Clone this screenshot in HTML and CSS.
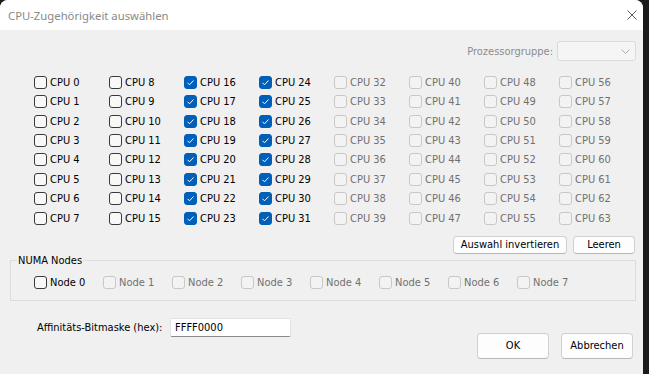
FILE: index.html
```html
<!DOCTYPE html>
<html lang="de">
<head>
  <meta charset="UTF-8">
  <meta name="viewport" content="width=device-width, initial-scale=1.0">
  <title>CPU-Zugehörigkeit auswählen</title>
  <link rel="stylesheet" href="styles.css">
</head>
<body>
  <div class="dialog">
    <div class="titlebar">
      <span class="title">CPU-Zugehörigkeit auswählen</span>
      <span class="close">
        <svg width="10" height="10" viewBox="0 0 10 10"><path d="M0.5 0.5 L9.5 9.5 M9.5 0.5 L0.5 9.5" stroke="#5c5c5c" stroke-width="1" fill="none"/></svg>
      </span>
    </div>

    <div class="content">
      <div class="group-row">
        <span class="group-label">Prozessorgruppe:</span>
        <div class="combo">
          <svg width="9" height="5" viewBox="0 0 9 5"><path d="M0.5 0.5 L4.5 4.5 L8.5 0.5" stroke="#b0b0b0" stroke-width="1" fill="none"/></svg>
        </div>
      </div>

      <div class="cpu-grid">
        <label class="cb"><span class="box"></span>CPU 0</label>
        <label class="cb"><span class="box"></span>CPU 1</label>
        <label class="cb"><span class="box"></span>CPU 2</label>
        <label class="cb"><span class="box"></span>CPU 3</label>
        <label class="cb"><span class="box"></span>CPU 4</label>
        <label class="cb"><span class="box"></span>CPU 5</label>
        <label class="cb"><span class="box"></span>CPU 6</label>
        <label class="cb"><span class="box"></span>CPU 7</label>

        <label class="cb"><span class="box"></span>CPU 8</label>
        <label class="cb"><span class="box"></span>CPU 9</label>
        <label class="cb"><span class="box"></span>CPU 10</label>
        <label class="cb"><span class="box"></span>CPU 11</label>
        <label class="cb"><span class="box"></span>CPU 12</label>
        <label class="cb"><span class="box"></span>CPU 13</label>
        <label class="cb"><span class="box"></span>CPU 14</label>
        <label class="cb"><span class="box"></span>CPU 15</label>

        <label class="cb on"><span class="box"><svg viewBox="0 0 11 11"><path d="M2.5 5.8 L4.5 7.8 L8.5 3.5"/></svg></span>CPU 16</label>
        <label class="cb on"><span class="box"><svg viewBox="0 0 11 11"><path d="M2.5 5.8 L4.5 7.8 L8.5 3.5"/></svg></span>CPU 17</label>
        <label class="cb on"><span class="box"><svg viewBox="0 0 11 11"><path d="M2.5 5.8 L4.5 7.8 L8.5 3.5"/></svg></span>CPU 18</label>
        <label class="cb on"><span class="box"><svg viewBox="0 0 11 11"><path d="M2.5 5.8 L4.5 7.8 L8.5 3.5"/></svg></span>CPU 19</label>
        <label class="cb on"><span class="box"><svg viewBox="0 0 11 11"><path d="M2.5 5.8 L4.5 7.8 L8.5 3.5"/></svg></span>CPU 20</label>
        <label class="cb on"><span class="box"><svg viewBox="0 0 11 11"><path d="M2.5 5.8 L4.5 7.8 L8.5 3.5"/></svg></span>CPU 21</label>
        <label class="cb on"><span class="box"><svg viewBox="0 0 11 11"><path d="M2.5 5.8 L4.5 7.8 L8.5 3.5"/></svg></span>CPU 22</label>
        <label class="cb on"><span class="box"><svg viewBox="0 0 11 11"><path d="M2.5 5.8 L4.5 7.8 L8.5 3.5"/></svg></span>CPU 23</label>

        <label class="cb on"><span class="box"><svg viewBox="0 0 11 11"><path d="M2.5 5.8 L4.5 7.8 L8.5 3.5"/></svg></span>CPU 24</label>
        <label class="cb on"><span class="box"><svg viewBox="0 0 11 11"><path d="M2.5 5.8 L4.5 7.8 L8.5 3.5"/></svg></span>CPU 25</label>
        <label class="cb on"><span class="box"><svg viewBox="0 0 11 11"><path d="M2.5 5.8 L4.5 7.8 L8.5 3.5"/></svg></span>CPU 26</label>
        <label class="cb on"><span class="box"><svg viewBox="0 0 11 11"><path d="M2.5 5.8 L4.5 7.8 L8.5 3.5"/></svg></span>CPU 27</label>
        <label class="cb on"><span class="box"><svg viewBox="0 0 11 11"><path d="M2.5 5.8 L4.5 7.8 L8.5 3.5"/></svg></span>CPU 28</label>
        <label class="cb on"><span class="box"><svg viewBox="0 0 11 11"><path d="M2.5 5.8 L4.5 7.8 L8.5 3.5"/></svg></span>CPU 29</label>
        <label class="cb on"><span class="box"><svg viewBox="0 0 11 11"><path d="M2.5 5.8 L4.5 7.8 L8.5 3.5"/></svg></span>CPU 30</label>
        <label class="cb on"><span class="box"><svg viewBox="0 0 11 11"><path d="M2.5 5.8 L4.5 7.8 L8.5 3.5"/></svg></span>CPU 31</label>

        <label class="cb off"><span class="box"></span>CPU 32</label>
        <label class="cb off"><span class="box"></span>CPU 33</label>
        <label class="cb off"><span class="box"></span>CPU 34</label>
        <label class="cb off"><span class="box"></span>CPU 35</label>
        <label class="cb off"><span class="box"></span>CPU 36</label>
        <label class="cb off"><span class="box"></span>CPU 37</label>
        <label class="cb off"><span class="box"></span>CPU 38</label>
        <label class="cb off"><span class="box"></span>CPU 39</label>

        <label class="cb off"><span class="box"></span>CPU 40</label>
        <label class="cb off"><span class="box"></span>CPU 41</label>
        <label class="cb off"><span class="box"></span>CPU 42</label>
        <label class="cb off"><span class="box"></span>CPU 43</label>
        <label class="cb off"><span class="box"></span>CPU 44</label>
        <label class="cb off"><span class="box"></span>CPU 45</label>
        <label class="cb off"><span class="box"></span>CPU 46</label>
        <label class="cb off"><span class="box"></span>CPU 47</label>

        <label class="cb off"><span class="box"></span>CPU 48</label>
        <label class="cb off"><span class="box"></span>CPU 49</label>
        <label class="cb off"><span class="box"></span>CPU 50</label>
        <label class="cb off"><span class="box"></span>CPU 51</label>
        <label class="cb off"><span class="box"></span>CPU 52</label>
        <label class="cb off"><span class="box"></span>CPU 53</label>
        <label class="cb off"><span class="box"></span>CPU 54</label>
        <label class="cb off"><span class="box"></span>CPU 55</label>

        <label class="cb off"><span class="box"></span>CPU 56</label>
        <label class="cb off"><span class="box"></span>CPU 57</label>
        <label class="cb off"><span class="box"></span>CPU 58</label>
        <label class="cb off"><span class="box"></span>CPU 59</label>
        <label class="cb off"><span class="box"></span>CPU 60</label>
        <label class="cb off"><span class="box"></span>CPU 61</label>
        <label class="cb off"><span class="box"></span>CPU 62</label>
        <label class="cb off"><span class="box"></span>CPU 63</label>
      </div>

      <div class="actions">
        <button class="btn invert">Auswahl invertieren</button>
        <button class="btn clear">Leeren</button>
      </div>

      <fieldset class="numa">
        <legend>NUMA Nodes</legend>
        <div class="node-row">
          <label class="cb"><span class="box"></span>Node 0</label>
          <label class="cb off"><span class="box"></span>Node 1</label>
          <label class="cb off"><span class="box"></span>Node 2</label>
          <label class="cb off"><span class="box"></span>Node 3</label>
          <label class="cb off"><span class="box"></span>Node 4</label>
          <label class="cb off"><span class="box"></span>Node 5</label>
          <label class="cb off"><span class="box"></span>Node 6</label>
          <label class="cb off"><span class="box"></span>Node 7</label>
        </div>
      </fieldset>

      <div class="bottom">
        <div class="mask">
          <label for="mask">Affinitäts-Bitmaske (hex):</label>
          <input id="mask" type="text" value="FFFF0000">
        </div>
        <div class="dialog-buttons">
          <button class="btn dlg">OK</button>
          <button class="btn dlg">Abbrechen</button>
        </div>
      </div>
    </div>
  </div>
</body>
</html>
```

FILE: styles.css
```css
body {
  margin: 0;
  background-color: #1b1b1b;
  font-family: "DejaVu Sans Condensed", "DejaVu Sans", sans-serif;
  font-size: 11px;
  color: #000;
}

.dialog {
  width: 643px;
  height: 374px;
  background: #f0f0f0;
  border-radius: 8px 8px 0 0;
  overflow: hidden;
}

.titlebar {
  height: 30px;
  background: #ffffff;
  display: flex;
  align-items: center;
  justify-content: space-between;
  padding-left: 8px;
}

.title {
  font-family: "Noto Sans", sans-serif;
  font-size: 11.3px;
  color: #8a8a8a;
}

.close {
  width: 22px;
  height: 30px;
  display: flex;
  align-items: center;
  justify-content: center;
}

.content {
  padding: 11px 7px 0 10px;
}

.group-row {
  display: flex;
  justify-content: flex-end;
  align-items: center;
  gap: 4px;
  height: 20px;
}

.group-label {
  color: #8c8c8c;
}

.combo {
  width: 79px;
  height: 20px;
  box-sizing: border-box;
  border: 1px solid #dadada;
  border-radius: 3px;
  background: #f5f5f5;
  display: flex;
  align-items: center;
  justify-content: flex-end;
  padding-right: 5px;
}

.cpu-grid {
  display: grid;
  grid-template-columns: repeat(8, 75px);
  grid-template-rows: repeat(8, 19.4px);
  grid-auto-flow: column;
  margin: 11.6px 0 0 24px;
}

.cb {
  display: flex;
  align-items: center;
  gap: 3px;
  white-space: nowrap;
}

.cb .box {
  width: 13px;
  height: 13px;
  box-sizing: border-box;
  border: 1px solid #3a3a3a;
  border-radius: 3px;
  background: #f8f8f8;
  flex: none;
}

.cb.on .box {
  background: #005fb8;
  border-color: #005fb8;
}

.cb .box svg {
  display: block;
  width: 11px;
  height: 11px;
  fill: none;
  stroke: #fff;
  stroke-width: 1;
}

.cb.off {
  color: #707070;
}

.cb.off .box {
  border-color: #c8c8c8;
  background: #f3f3f3;
}

.actions {
  display: flex;
  justify-content: flex-end;
  gap: 6px;
  margin-top: 8px;
  padding-right: 1px;
}

.btn {
  height: 18px;
  box-sizing: border-box;
  border: 1px solid #d0d0d0;
  border-bottom-color: #b8b8b8;
  border-radius: 4px;
  background: #fdfdfd;
  font: inherit;
  color: #000;
  padding: 0;
}

.btn.invert {
  width: 114px;
}

.btn.clear {
  width: 62px;
}

.numa {
  margin: 0;
  padding: 7px 0 9px 6px;
  border: 1px solid #dcdcdc;
}

.numa legend {
  padding: 0 1px;
  line-height: 14px;
}

.node-row {
  display: grid;
  grid-template-columns: repeat(8, 69px);
  height: 16px;
  margin-left: 17px;
}

.bottom {
  display: flex;
  justify-content: space-between;
  align-items: flex-start;
  margin-top: 17px;
}

.mask {
  display: flex;
  align-items: center;
  margin-left: 27px;
}

.mask label {
  width: 133px;
}

.mask input {
  width: 121px;
  height: 19px;
  box-sizing: border-box;
  border: 1px solid #e2e2e2;
  border-bottom-color: #8a8a8a;
  border-radius: 2px;
  background: #fff;
  padding: 0 4px;
  font: inherit;
  color: #000;
}

.dialog-buttons {
  display: flex;
  gap: 12px;
  margin-top: 15px;
  padding-right: 3px;
}

.btn.dlg {
  width: 72px;
  height: 26px;
}
```
